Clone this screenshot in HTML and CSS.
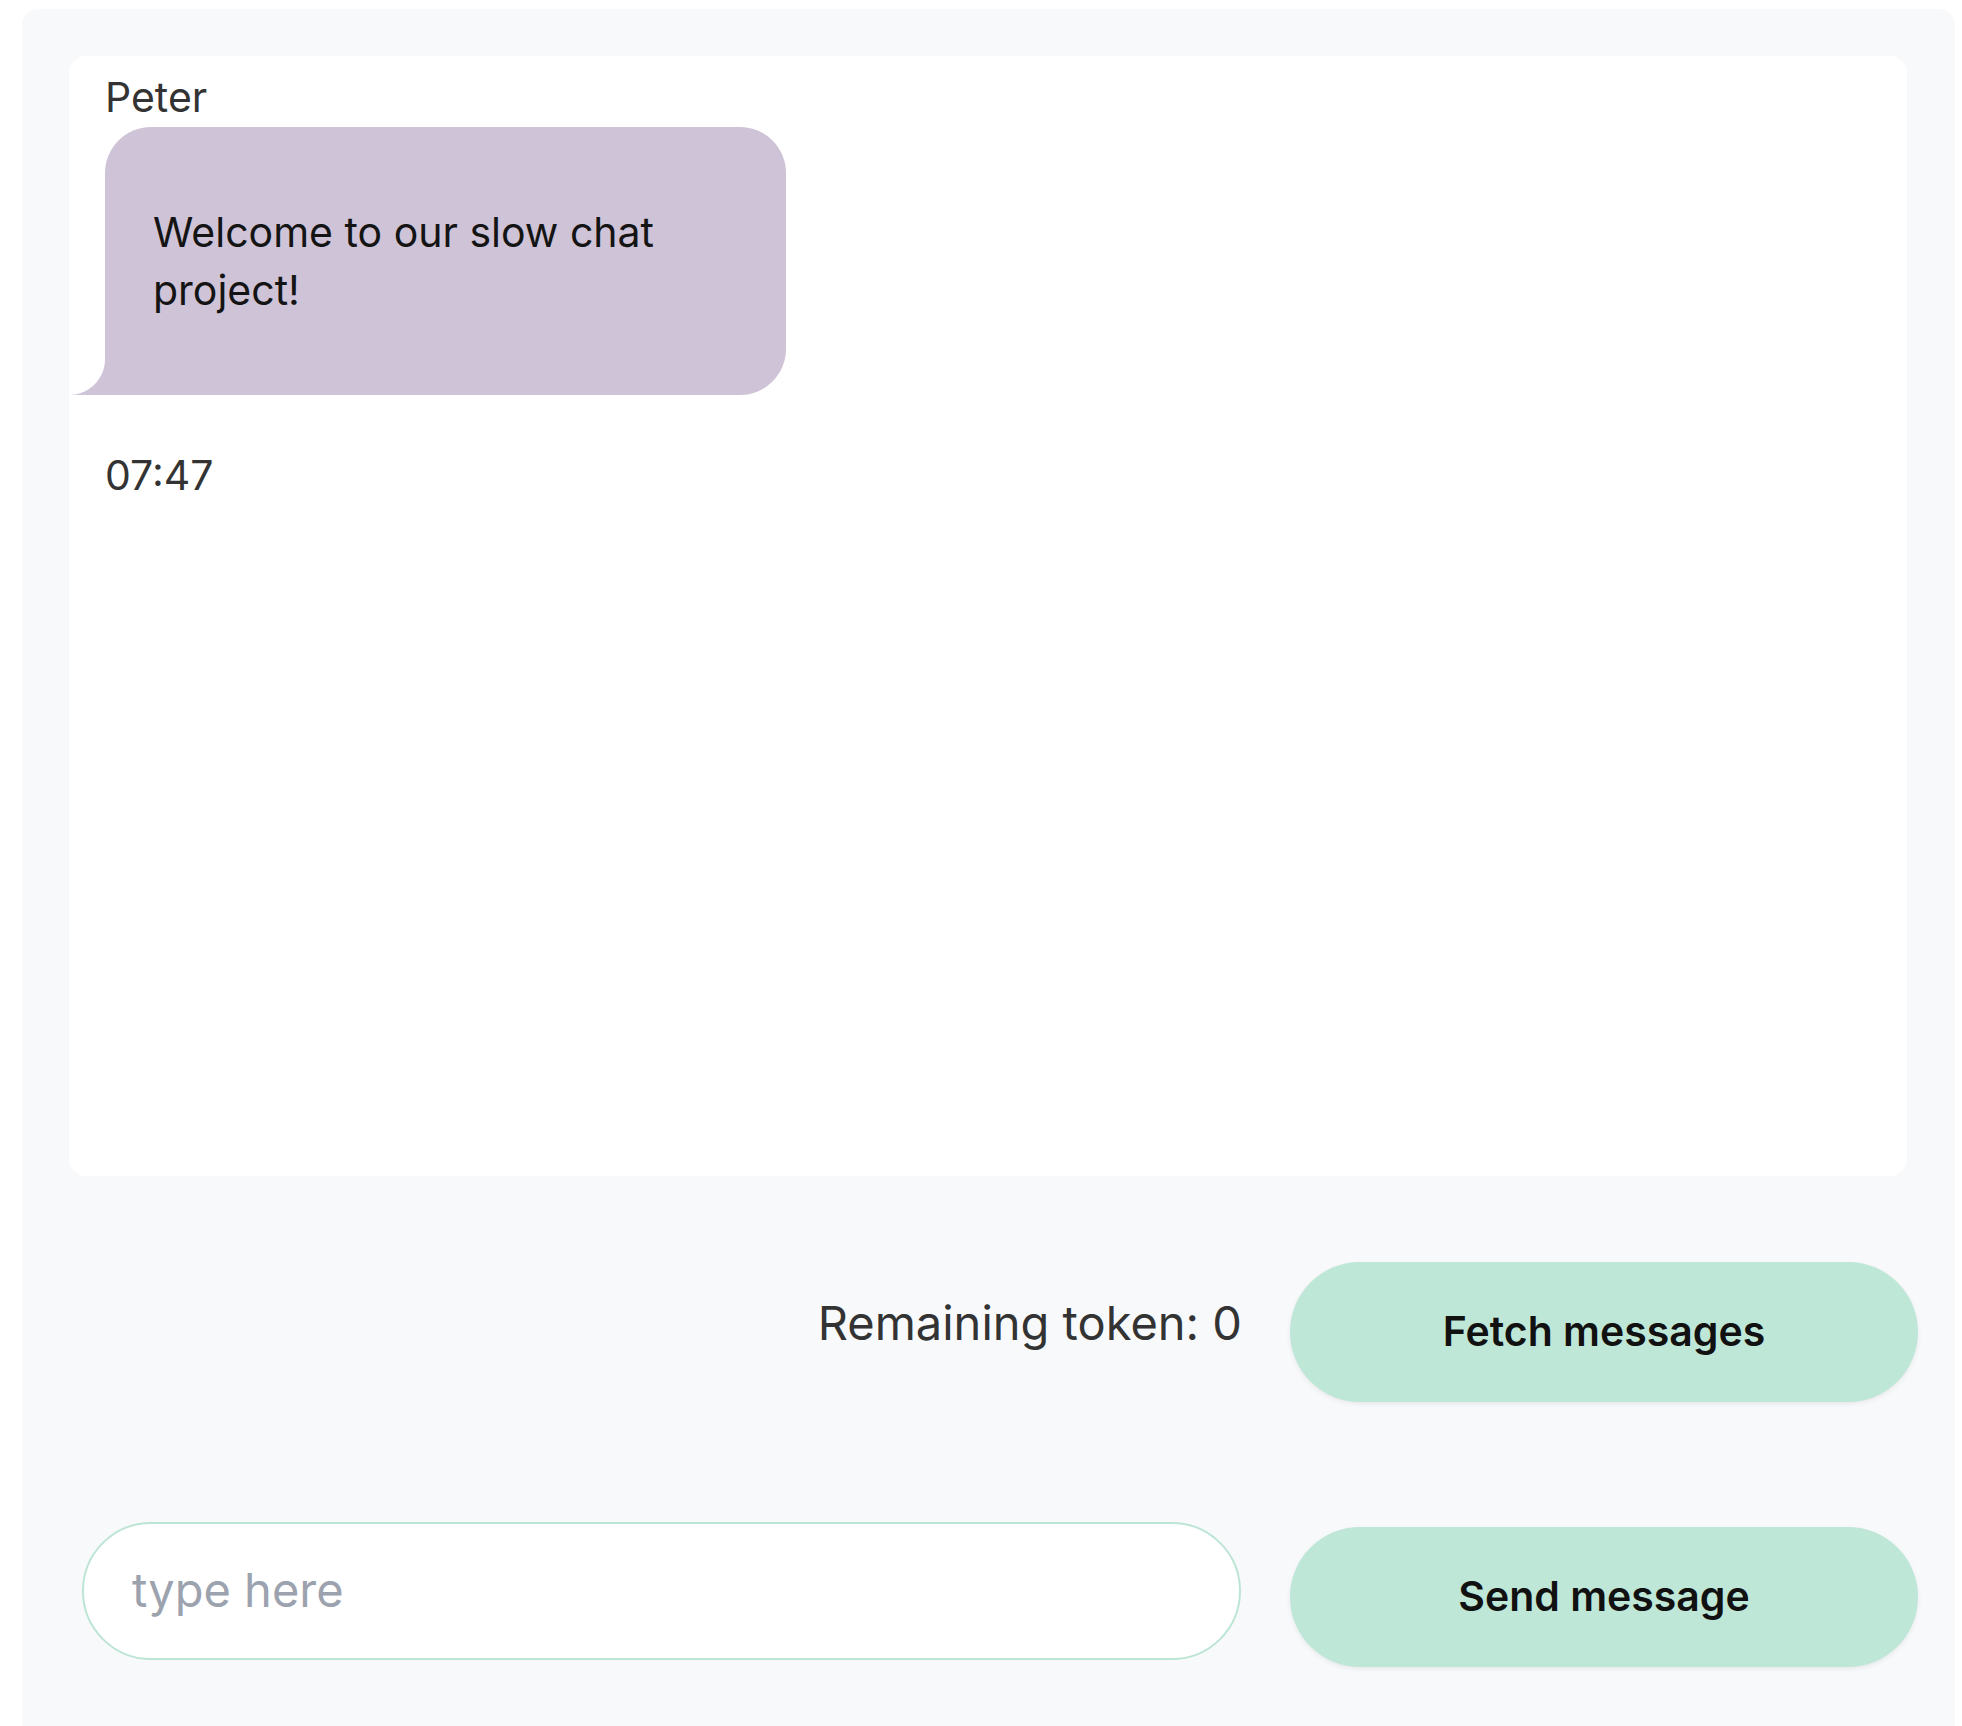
FILE: index.html
```html
<!DOCTYPE html>
<html lang="en">
<head>
<meta charset="utf-8">
<title>Slow chat</title>
<link rel="stylesheet" href="styles.css">
</head>
<body>
<div class="app">
  <section class="chat">
    <div class="message">
      <div class="author">Peter</div>
      <div class="bubble">Welcome to our slow chat project!</div>
      <div class="time">07:47</div>
    </div>
  </section>
  <section class="controls">
    <div class="tokens">Remaining token: 0</div>
    <button class="btn">Fetch messages</button>
    <input class="field" type="text" placeholder="type here">
    <button class="btn btn-send">Send message</button>
  </section>
</div>
</body>
</html>
```

FILE: styles.css
```css
html, body {
  margin: 0;
  padding: 0;
  overflow: hidden;
  background: #ffffff;
}

body {
  padding: 9px 7px 0 22px;
  font-family: Inter, "Noto Sans", sans-serif;
  color: #333333;
}

.app {
  box-sizing: border-box;
  height: 1760px;
  background: #f8f9fb;
  border-radius: 16px;
  padding: 47px 48px 47px 47px;
}

.chat {
  box-sizing: border-box;
  height: 1120px;
  background: #ffffff;
  border-radius: 17px;
  padding: 18px 36px 0 36px;
}

.author {
  font-size: 41px;
  line-height: 46px;
  color: #333333;
}

.bubble {
  position: relative;
  box-sizing: border-box;
  width: 681px;
  margin-top: 7px;
  padding: 76px 48px 76px 48px;
  background: #cfc3d7;
  border-radius: 46px 46px 46px 0;
  font-size: 41px;
  line-height: 58px;
  color: #141414;
}

.bubble::before {
  content: "";
  position: absolute;
  left: -36px;
  bottom: 0;
  width: 36px;
  height: 36px;
  background: radial-gradient(circle at 0 0, transparent 35.5px, #cfc3d7 36.5px);
}

.time {
  margin-top: 57px;
  font-size: 41px;
  line-height: 46px;
  color: #333333;
}

.controls {
  display: grid;
  grid-template-columns: 1159px 628px;
  column-gap: 49px;
  row-gap: 120px;
  align-items: start;
  margin-top: 86px;
  padding-left: 13px;
}

.tokens {
  justify-self: end;
  margin-top: 33px;
  margin-right: -1px;
  font-size: 47px;
  line-height: 56px;
  color: #333333;
}

.btn {
  height: 140px;
  border: none;
  border-radius: 70px;
  background: #bfe7d8;
  box-shadow: 0 2px 5px rgba(0, 0, 0, 0.07);
  font-family: Inter, "Noto Sans", sans-serif;
  font-size: 41px;
  font-weight: 600;
  color: #111111;
  padding: 0 0 3px 0;
}

.btn-send {
  margin-top: 5px;
}

.field {
  box-sizing: border-box;
  height: 138px;
  width: 100%;
  border: 2px solid #bde5d5;
  border-radius: 69px;
  background: #ffffff;
  padding: 0 0 3px 48px;
  font-family: Inter, "Noto Sans", sans-serif;
  font-size: 47px;
  color: #333333;
  outline: none;
}

.field::placeholder {
  color: #9ca3af;
}
```
